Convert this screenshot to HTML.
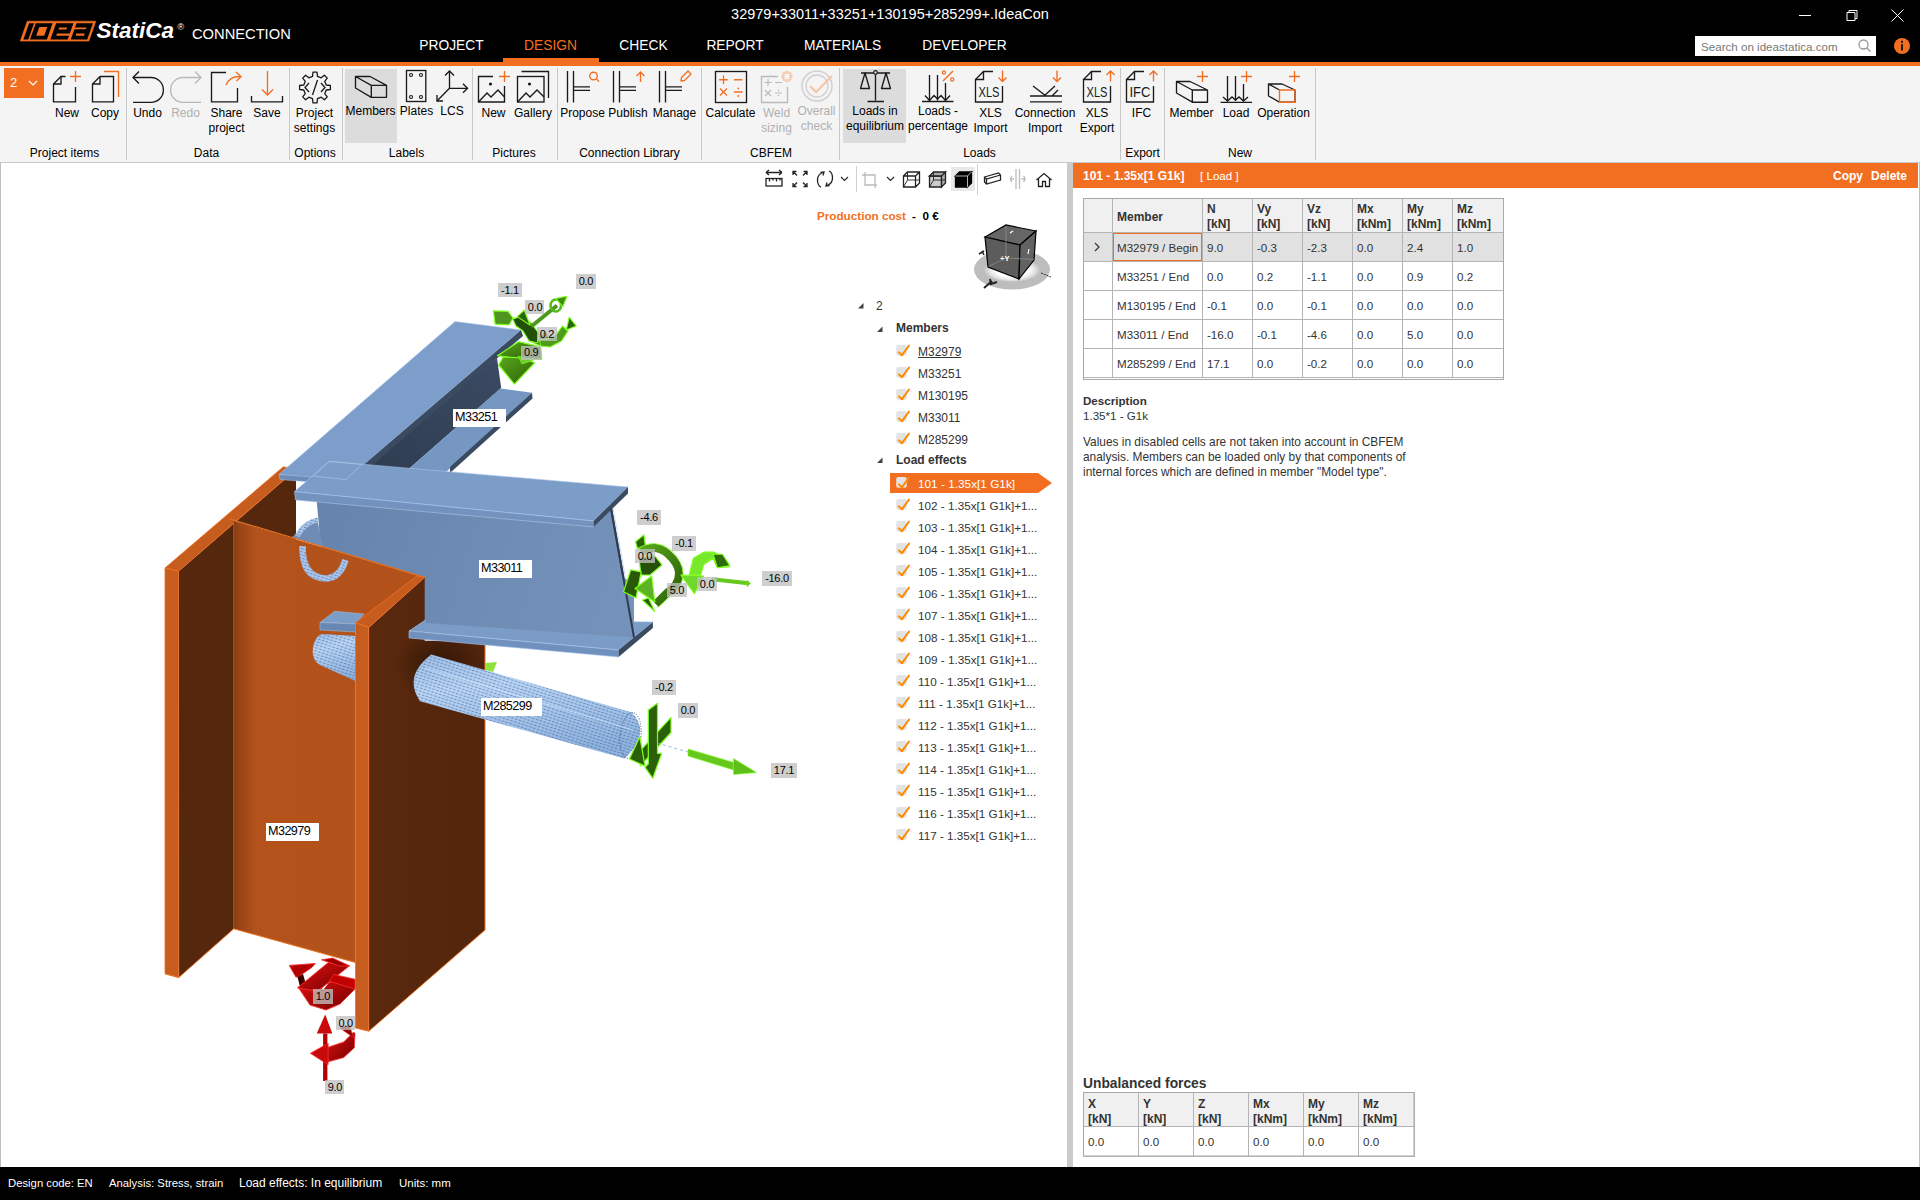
<!DOCTYPE html>
<html><head><meta charset="utf-8"><style>
html,body{margin:0;padding:0;width:1920px;height:1200px;overflow:hidden;background:#fff;font-family:"Liberation Sans", sans-serif;}
.t{position:absolute;white-space:nowrap;}
.r{position:absolute;}
svg{position:absolute;overflow:visible;}
</style></head><body>
<div class="r" style="left:0px;top:0px;width:1920px;height:62px;background:#000;"></div><div class="t" style="left:390px;width:1000px;text-align:center;top:4.9px;font-size:14.5px;line-height:18.1px;color:#fff;font-weight:400;">32979+33011+33251+130195+285299+.IdeaCon</div><svg style="left:0;top:0" width="1920" height="62"><g stroke="#fff" stroke-width="1" fill="none"><path d="M1799,15.5 H1811"/><path d="M1847,12.5 h8 v8 h-8 z M1849,12.5 v-2 h8 v8 h-2"/><path d="M1891.5,9.5 L1903.5,21.5 M1903.5,9.5 L1891.5,21.5"/></g></svg><svg style="left:0;top:0" width="300" height="62"><path d="M27.23,21.2 L95.83,21.2 L88.87,41.1 L20.27,41.1 Z" fill="#f26f22" stroke="#f26f22" stroke-width="0.6" stroke-linejoin="round"/><path d="M29.13,23.2 L34.03,23.2 L28.29,39.6 L23.39,39.6 Z M35.73,23.2 L52.63,23.2 L46.89,39.6 L29.99,39.6 Z M56.13,23.2 L73.43,23.2 L67.69,39.6 L50.39,39.6 Z M76.53,23.2 L92.93,23.2 L87.19,39.6 L70.79,39.6 Z" fill="#000"/><path d="M39.30,27 L47.30,27 L44.22,35.8 L36.22,35.8 Z M59.16,27.4 L67.16,27.4 L66.39,29.6 L58.39,29.6 Z M56.99,33.6 L70.59,33.6 L69.82,35.8 L56.22,35.8 Z M73.76,27.4 L86.46,27.4 L85.83,29.2 L73.13,29.2 Z M76.39,33.6 L84.79,33.6 L84.02,35.8 L75.62,35.8 Z" fill="#f26f22"/></svg><div class="t" style="left:96.5px;top:17.4px;font-size:22.5px;line-height:28.1px;color:#fff;font-weight:400;"><i><b>StatiCa</b></i></div><div class="t" style="left:177.5px;top:21.9px;font-size:9px;line-height:11.2px;color:#fff;font-weight:400;">®</div><div class="t" style="left:192px;top:25.3px;font-size:14.7px;line-height:18.4px;color:#fff;font-weight:400;">CONNECTION</div><div class="t" style="left:-48.5px;width:1000px;text-align:center;top:36.9px;font-size:13.8px;line-height:17.2px;color:#fff;font-weight:400;">PROJECT</div><div class="t" style="left:50.5px;width:1000px;text-align:center;top:36.9px;font-size:13.8px;line-height:17.2px;color:#f26f22;font-weight:400;">DESIGN</div><div class="t" style="left:143.5px;width:1000px;text-align:center;top:36.9px;font-size:13.8px;line-height:17.2px;color:#fff;font-weight:400;">CHECK</div><div class="t" style="left:235.0px;width:1000px;text-align:center;top:36.9px;font-size:13.8px;line-height:17.2px;color:#fff;font-weight:400;">REPORT</div><div class="t" style="left:342.5px;width:1000px;text-align:center;top:36.9px;font-size:13.8px;line-height:17.2px;color:#fff;font-weight:400;">MATERIALS</div><div class="t" style="left:464.5px;width:1000px;text-align:center;top:36.9px;font-size:13.8px;line-height:17.2px;color:#fff;font-weight:400;">DEVELOPER</div><div class="r" style="left:503px;top:58px;width:96px;height:4px;background:#f26f22;"></div><div class="r" style="left:1695px;top:36px;width:181px;height:20px;background:#fff;"></div><div class="t" style="left:1701px;top:40.0px;font-size:11.6px;line-height:14.5px;color:#777;font-weight:400;">Search on ideastatica.com</div><svg style="left:0;top:0" width="1920" height="62"><g stroke="#999" stroke-width="1.3" fill="none"><circle cx="1863.5" cy="44.5" r="4.5"/><path d="M1866.8,47.8 L1870.5,51.5"/></g><circle cx="1902" cy="46" r="8" fill="#f26f22"/><rect x="1901" y="44.2" width="2" height="6.3" fill="#1a1a1a"/><rect x="1901" y="40.8" width="2" height="2" fill="#1a1a1a"/></svg><div class="r" style="left:0px;top:62px;width:1920px;height:4px;background:#f26f22;"></div><div class="r" style="left:0px;top:66px;width:1920px;height:96px;background:#f4f4f4;"></div><div class="r" style="left:0px;top:162px;width:1920px;height:1px;background:#c9c9c9;"></div><div class="r" style="left:345px;top:69px;width:52px;height:74px;background:#dcdcdc;"></div><div class="r" style="left:843px;top:69px;width:63px;height:74px;background:#dcdcdc;"></div><div class="r" style="left:126px;top:68px;width:1px;height:92px;background:#c8c8c8;"></div><div class="r" style="left:289px;top:68px;width:1px;height:92px;background:#c8c8c8;"></div><div class="r" style="left:342px;top:68px;width:1px;height:92px;background:#c8c8c8;"></div><div class="r" style="left:472px;top:68px;width:1px;height:92px;background:#c8c8c8;"></div><div class="r" style="left:557px;top:68px;width:1px;height:92px;background:#c8c8c8;"></div><div class="r" style="left:701px;top:68px;width:1px;height:92px;background:#c8c8c8;"></div><div class="r" style="left:839px;top:68px;width:1px;height:92px;background:#c8c8c8;"></div><div class="r" style="left:1120px;top:68px;width:1px;height:92px;background:#c8c8c8;"></div><div class="r" style="left:1164px;top:68px;width:1px;height:92px;background:#c8c8c8;"></div><div class="r" style="left:1315px;top:68px;width:1px;height:92px;background:#c8c8c8;"></div><div class="t" style="left:-435.5px;width:1000px;text-align:center;top:145.5px;font-size:12px;line-height:15.0px;color:#000;font-weight:400;">Project items</div><div class="t" style="left:-293.5px;width:1000px;text-align:center;top:145.5px;font-size:12px;line-height:15.0px;color:#000;font-weight:400;">Data</div><div class="t" style="left:-185.0px;width:1000px;text-align:center;top:145.5px;font-size:12px;line-height:15.0px;color:#000;font-weight:400;">Options</div><div class="t" style="left:-93.5px;width:1000px;text-align:center;top:145.5px;font-size:12px;line-height:15.0px;color:#000;font-weight:400;">Labels</div><div class="t" style="left:14.0px;width:1000px;text-align:center;top:145.5px;font-size:12px;line-height:15.0px;color:#000;font-weight:400;">Pictures</div><div class="t" style="left:129.5px;width:1000px;text-align:center;top:145.5px;font-size:12px;line-height:15.0px;color:#000;font-weight:400;">Connection Library</div><div class="t" style="left:271.0px;width:1000px;text-align:center;top:145.5px;font-size:12px;line-height:15.0px;color:#000;font-weight:400;">CBFEM</div><div class="t" style="left:479.5px;width:1000px;text-align:center;top:145.5px;font-size:12px;line-height:15.0px;color:#000;font-weight:400;">Loads</div><div class="t" style="left:642.5px;width:1000px;text-align:center;top:145.5px;font-size:12px;line-height:15.0px;color:#000;font-weight:400;">Export</div><div class="t" style="left:740.0px;width:1000px;text-align:center;top:145.5px;font-size:12px;line-height:15.0px;color:#000;font-weight:400;">New</div><div class="t" style="left:-433px;width:1000px;text-align:center;top:105.5px;font-size:12px;line-height:15.0px;color:#000;font-weight:400;">New</div><div class="t" style="left:-395px;width:1000px;text-align:center;top:105.5px;font-size:12px;line-height:15.0px;color:#000;font-weight:400;">Copy</div><div class="t" style="left:-352.5px;width:1000px;text-align:center;top:105.5px;font-size:12px;line-height:15.0px;color:#000;font-weight:400;">Undo</div><div class="t" style="left:-314.5px;width:1000px;text-align:center;top:105.5px;font-size:12px;line-height:15.0px;color:#b0b0b0;font-weight:400;">Redo</div><div class="t" style="left:-273.5px;width:1000px;text-align:center;top:105.5px;font-size:12px;line-height:15.0px;color:#000;font-weight:400;">Share</div><div class="t" style="left:-273.5px;width:1000px;text-align:center;top:120.5px;font-size:12px;line-height:15.0px;color:#000;font-weight:400;">project</div><div class="t" style="left:-233px;width:1000px;text-align:center;top:105.5px;font-size:12px;line-height:15.0px;color:#000;font-weight:400;">Save</div><div class="t" style="left:-185.5px;width:1000px;text-align:center;top:105.5px;font-size:12px;line-height:15.0px;color:#000;font-weight:400;">Project</div><div class="t" style="left:-185.5px;width:1000px;text-align:center;top:120.5px;font-size:12px;line-height:15.0px;color:#000;font-weight:400;">settings</div><div class="t" style="left:-129.5px;width:1000px;text-align:center;top:103.5px;font-size:12px;line-height:15.0px;color:#000;font-weight:400;">Members</div><div class="t" style="left:-83.5px;width:1000px;text-align:center;top:103.5px;font-size:12px;line-height:15.0px;color:#000;font-weight:400;">Plates</div><div class="t" style="left:-48px;width:1000px;text-align:center;top:103.5px;font-size:12px;line-height:15.0px;color:#000;font-weight:400;">LCS</div><div class="t" style="left:-6.5px;width:1000px;text-align:center;top:105.5px;font-size:12px;line-height:15.0px;color:#000;font-weight:400;">New</div><div class="t" style="left:33px;width:1000px;text-align:center;top:105.5px;font-size:12px;line-height:15.0px;color:#000;font-weight:400;">Gallery</div><div class="t" style="left:82.5px;width:1000px;text-align:center;top:105.5px;font-size:12px;line-height:15.0px;color:#000;font-weight:400;">Propose</div><div class="t" style="left:128px;width:1000px;text-align:center;top:105.5px;font-size:12px;line-height:15.0px;color:#000;font-weight:400;">Publish</div><div class="t" style="left:174.5px;width:1000px;text-align:center;top:105.5px;font-size:12px;line-height:15.0px;color:#000;font-weight:400;">Manage</div><div class="t" style="left:230.5px;width:1000px;text-align:center;top:105.5px;font-size:12px;line-height:15.0px;color:#000;font-weight:400;">Calculate</div><div class="t" style="left:276.5px;width:1000px;text-align:center;top:105.5px;font-size:12px;line-height:15.0px;color:#b0b0b0;font-weight:400;">Weld</div><div class="t" style="left:276.5px;width:1000px;text-align:center;top:120.5px;font-size:12px;line-height:15.0px;color:#b0b0b0;font-weight:400;">sizing</div><div class="t" style="left:316.5px;width:1000px;text-align:center;top:103.5px;font-size:12px;line-height:15.0px;color:#b0b0b0;font-weight:400;">Overall</div><div class="t" style="left:316.5px;width:1000px;text-align:center;top:118.5px;font-size:12px;line-height:15.0px;color:#b0b0b0;font-weight:400;">check</div><div class="t" style="left:375px;width:1000px;text-align:center;top:103.5px;font-size:12px;line-height:15.0px;color:#000;font-weight:400;">Loads in</div><div class="t" style="left:375px;width:1000px;text-align:center;top:118.5px;font-size:12px;line-height:15.0px;color:#000;font-weight:400;">equilibrium</div><div class="t" style="left:438px;width:1000px;text-align:center;top:103.5px;font-size:12px;line-height:15.0px;color:#000;font-weight:400;">Loads -</div><div class="t" style="left:438px;width:1000px;text-align:center;top:118.5px;font-size:12px;line-height:15.0px;color:#000;font-weight:400;">percentage</div><div class="t" style="left:490.5px;width:1000px;text-align:center;top:105.5px;font-size:12px;line-height:15.0px;color:#000;font-weight:400;">XLS</div><div class="t" style="left:490.5px;width:1000px;text-align:center;top:120.5px;font-size:12px;line-height:15.0px;color:#000;font-weight:400;">Import</div><div class="t" style="left:545px;width:1000px;text-align:center;top:105.5px;font-size:12px;line-height:15.0px;color:#000;font-weight:400;">Connection</div><div class="t" style="left:545px;width:1000px;text-align:center;top:120.5px;font-size:12px;line-height:15.0px;color:#000;font-weight:400;">Import</div><div class="t" style="left:597px;width:1000px;text-align:center;top:105.5px;font-size:12px;line-height:15.0px;color:#000;font-weight:400;">XLS</div><div class="t" style="left:597px;width:1000px;text-align:center;top:120.5px;font-size:12px;line-height:15.0px;color:#000;font-weight:400;">Export</div><div class="t" style="left:641.5px;width:1000px;text-align:center;top:105.5px;font-size:12px;line-height:15.0px;color:#000;font-weight:400;">IFC</div><div class="t" style="left:691.5px;width:1000px;text-align:center;top:105.5px;font-size:12px;line-height:15.0px;color:#000;font-weight:400;">Member</div><div class="t" style="left:736px;width:1000px;text-align:center;top:105.5px;font-size:12px;line-height:15.0px;color:#000;font-weight:400;">Load</div><div class="t" style="left:783.5px;width:1000px;text-align:center;top:105.5px;font-size:12px;line-height:15.0px;color:#000;font-weight:400;">Operation</div><div class="r" style="left:4px;top:68px;width:40px;height:30px;background:#f26f22;"></div><div class="t" style="left:10px;top:75.4px;font-size:13px;line-height:16.2px;color:#fff;font-weight:400;">2</div><svg style="left:0;top:0" width="60" height="100"><path d="M29,81 L33,85 L37,81" stroke="#fff" stroke-width="1.2" fill="none"/></svg><div class="r" style="left:0px;top:163px;width:1067px;height:1004px;background:#fff;"></div><div class="r" style="left:0px;top:163px;width:1px;height:1004px;background:#bdbdbd;"></div><div class="r" style="left:1067px;top:163px;width:6px;height:1004px;background:#cbcbcb;"></div><div class="r" style="left:1073px;top:163px;width:846px;height:1004px;background:#fff;"></div><div class="r" style="left:1919px;top:163px;width:1px;height:1004px;background:#b8c4cc;"></div><div class="r" style="left:0px;top:1167px;width:1920px;height:33px;background:#000;"></div><div class="t" style="left:8px;top:1176.4px;font-size:11.3px;line-height:14.1px;color:#fff;font-weight:400;">Design code: EN</div><div class="t" style="left:109px;top:1176.4px;font-size:11.3px;line-height:14.1px;color:#fff;font-weight:400;">Analysis: Stress, strain</div><div class="t" style="left:239px;top:1176.0px;font-size:12px;line-height:15.0px;color:#fff;font-weight:400;">Load effects: In equilibrium</div><div class="t" style="left:399px;top:1176.3px;font-size:11.5px;line-height:14.4px;color:#fff;font-weight:400;">Units: mm</div><svg style="left:0;top:0" width="1920" height="170"><g stroke-width="1.35" fill="none" stroke-linecap="butt"><path d="M65.5,76.5 H61 L53.5,84 V101.8 H75.5 V87" stroke="#1a1a1a"/><path d="M53.5,84 H61 V76.5" stroke="#1a1a1a"/><path d="M75.5,71 V82 M70,76.5 H81" stroke="#f26f22"/><path d="M100,76.5 H113.5 V101.8 H92.5 V84 L100,76.5 M92.5,84 H100 V76.5" stroke="#1a1a1a"/><path d="M104,71.5 H118.5 V97" stroke="#f26f22"/><path d="M133,77.5 H151 A12.4,12.4 0 0 1 151,102.3 H133" stroke="#1a1a1a"/><path d="M139,71.5 L133,77.5 L139,83.5" stroke="#1a1a1a"/><path d="M201,77.5 H183 A12.4,12.4 0 0 0 183,102.3 H201" stroke="#b9b9b9"/><path d="M195,71.5 L201,77.5 L195,83.5" stroke="#b9b9b9"/><path d="M226,72.5 H211.5 V101.8 H237.5 V88" stroke="#1a1a1a"/><path d="M226,85 Q230,76 240,76.5" stroke="#f26f22"/><path d="M236,72 L241,76.5 L236.5,81" stroke="#f26f22"/><path d="M267.5,71 V95" stroke="#f26f22"/><path d="M262,89.5 L267.5,95 L273,89.5" stroke="#f26f22"/><path d="M251.5,96 V101.8 H282.5 V96" stroke="#1a1a1a"/><path d="M326.2,85.0 L330.4,85.5 L330.4,89.5 L326.2,90.0 L324.7,93.7 L327.3,96.9 L324.4,99.8 L321.2,97.2 L317.5,98.7 L317.0,102.9 L313.0,102.9 L312.5,98.7 L308.8,97.2 L305.6,99.8 L302.7,96.9 L305.3,93.7 L303.8,90.0 L299.6,89.5 L299.6,85.5 L303.8,85.0 L305.3,81.3 L302.7,78.1 L305.6,75.2 L308.8,77.8 L312.5,76.3 L313.0,72.1 L317.0,72.1 L317.5,76.3 L321.2,77.8 L324.4,75.2 L327.3,78.1 L324.7,81.3 Z" stroke="#1a1a1a" stroke-width="1.3" stroke-linejoin="round"/><path d="M309,83 L305,87.5 L309,92 M321,83 L325,87.5 L321,92 M317.5,80 L312.5,95" stroke="#1a1a1a" stroke-width="1.3"/><path d="M355.5,76.5 H370 L386.5,85.3 V97.3 H371.3 L355.5,88 Z M355.5,76.5 L371.3,85.3 H386.5 M371.3,85.3 V97.3" stroke="#1a1a1a" stroke-linejoin="round"/><rect x="406.5" y="70.5" width="19.3" height="31" stroke="#1a1a1a"/><circle cx="411" cy="75" r="1.5" stroke="#1a1a1a" stroke-width="1.1"/><circle cx="421" cy="75" r="1.5" stroke="#1a1a1a" stroke-width="1.1"/><circle cx="411" cy="97" r="1.5" stroke="#1a1a1a" stroke-width="1.1"/><circle cx="421" cy="97" r="1.5" stroke="#1a1a1a" stroke-width="1.1"/><path d="M449.5,71 V88.3 H467.5 M449.5,88.3 L437,101" stroke="#1a1a1a"/><path d="M445,75.5 L449.5,71 L454,75.5 M463,83.8 L467.5,88.3 L463,92.8 M437,95 V101 H443" stroke="#1a1a1a"/><path d="M493,76.5 H478.5 V102 H504.5 V86" stroke="#1a1a1a"/><path d="M478.5,102 L487,93 L491,97 L498,90 L504.5,97" stroke="#1a1a1a"/><circle cx="490.5" cy="84" r="1.6" fill="#1a1a1a" stroke="none"/><path d="M504.5,71 V82 M499,76.5 H510" stroke="#f26f22"/><rect x="517.5" y="76.5" width="26.5" height="25.5" stroke="#1a1a1a"/><path d="M517.5,102 L526,93 L530,97 L537,90 L544,97" stroke="#1a1a1a"/><circle cx="529.5" cy="84" r="1.6" fill="#1a1a1a" stroke="none"/><path d="M521.5,71.5 H548.5 V98" stroke="#1a1a1a"/><path d="M567.5,71 V102.5 M573.5,71 V102.5 M573.5,86.8 H590.0 M573.5,90.3 H590.0" stroke="#1a1a1a"/><path d="M613.5,71 V102.5 M619.5,71 V102.5 M619.5,86.8 H636.0 M619.5,90.3 H636.0" stroke="#1a1a1a"/><path d="M659.5,71 V102.5 M665.5,71 V102.5 M665.5,86.8 H682.0 M665.5,90.3 H682.0" stroke="#1a1a1a"/><circle cx="593.5" cy="76" r="3.8" stroke="#f26f22"/><path d="M596.3,78.8 L599,81.5" stroke="#f26f22"/><path d="M640.5,72 V82 M636.5,76 L640.5,72 L644.5,76" stroke="#f26f22"/><path d="M681,81 L681.5,77.5 L688,71 L691,74 L684.5,80.5 Z" stroke="#f26f22" stroke-linejoin="round"/><rect x="715.5" y="71.5" width="31" height="31" stroke="#1a1a1a"/><path d="M723.5,75.5 V84 M719.2,79.7 H727.8 M734,79.7 H742.5 M720,88.5 L727,95.5 M727,88.5 L720,95.5 M734,92 H742.5" stroke="#f26f22"/><circle cx="738.3" cy="88.5" r="0.9" fill="#f26f22" stroke="none"/><circle cx="738.3" cy="96" r="0.9" fill="#f26f22" stroke="none"/><path d="M778,76.5 H761.5 V102.5 H787.5 V87" stroke="#b9b9b9"/><path d="M768,79 V86 M764.5,82.5 H771.5 M775,82.5 H782 M765,90 L771,96 M771,90 L765,96 M775,93 H782" stroke="#b9b9b9" stroke-width="1.2"/><circle cx="778.5" cy="90.5" r="0.8" fill="#b9b9b9" stroke="none"/><circle cx="778.5" cy="95.5" r="0.8" fill="#b9b9b9" stroke="none"/><path d="M790.1,75.6 L791.9,75.6 L791.9,77.4 L790.1,77.4 L789.8,78.0 L791.1,79.3 L789.8,80.6 L788.5,79.3 L787.9,79.6 L787.9,81.4 L786.1,81.4 L786.1,79.6 L785.5,79.3 L784.2,80.6 L782.9,79.3 L784.2,78.0 L783.9,77.4 L782.1,77.4 L782.1,75.6 L783.9,75.6 L784.2,75.0 L782.9,73.7 L784.2,72.4 L785.5,73.7 L786.1,73.4 L786.1,71.6 L787.9,71.6 L787.9,73.4 L788.5,73.7 L789.8,72.4 L791.1,73.7 L789.8,75.0 Z" stroke="#f7c3a3" stroke-width="1.1"/><circle cx="817" cy="86" r="15" stroke="#d0d0d0" stroke-width="1.5"/><circle cx="817" cy="86" r="11" stroke="#d0d0d0" stroke-width="1.3"/><path d="M810,86 L816,92 L832,76" stroke="#f7c3a3" stroke-width="2"/><path d="M875.5,74 V100.5 M867.5,101.5 H884 M861,73 H890" stroke="#1a1a1a"/><circle cx="875.5" cy="72.5" r="1.8" stroke="#1a1a1a" stroke-width="1.2" fill="#dcdcdc"/><path d="M865,73 L860.5,88.5 H869.5 Z M886,73 L881.5,88.5 H890.5 Z" stroke="#1a1a1a" stroke-linejoin="round"/><path d="M929.5,75 V100.5 M937.5,75 V100.5 M945.5,83 V100.5 M922,101.5 H953.5" stroke="#1a1a1a"/><path d="M925,95.5 L929.5,100.5 L934,95.5 L937.5,99 L941,95.5 L945.5,100.5 L950,95.5" stroke="#1a1a1a"/><path d="M953,71 L943,81" stroke="#f26f22"/><circle cx="944" cy="72.5" r="1.6" stroke="#f26f22" stroke-width="1.2"/><circle cx="952.2" cy="79.5" r="1.6" stroke="#f26f22" stroke-width="1.2"/><path d="M993,71.5 H983.5 L975.5,79.5 V102 H1002.5 V86" stroke="#1a1a1a"/><path d="M975.5,79.5 H983.5 V71.5" stroke="#1a1a1a"/><text x="978.5" y="97" font-family="Liberation Sans" font-size="15" fill="#1a1a1a" stroke="none" textLength="21" lengthAdjust="spacingAndGlyphs">XLS</text><path d="M1002.5,70.5 V81.5 M998.5,77.5 L1002.5,81.5 L1006.5,77.5" stroke="#f26f22"/><path d="M1101,71.5 H1091.5 L1083.5,79.5 V102 H1110.5 V86" stroke="#1a1a1a"/><path d="M1083.5,79.5 H1091.5 V71.5" stroke="#1a1a1a"/><text x="1086.5" y="97" font-family="Liberation Sans" font-size="15" fill="#1a1a1a" stroke="none" textLength="21" lengthAdjust="spacingAndGlyphs">XLS</text><path d="M1110.5,71 V81.5 M1106.5,75 L1110.5,71 L1114.5,75" stroke="#f26f22"/><path d="M1144,71.5 H1134.5 L1126.5,79.5 V102 H1153.5 V86" stroke="#1a1a1a"/><path d="M1126.5,79.5 H1134.5 V71.5" stroke="#1a1a1a"/><text x="1129.5" y="97" font-family="Liberation Sans" font-size="15" fill="#1a1a1a" stroke="none" textLength="21" lengthAdjust="spacingAndGlyphs">IFC</text><path d="M1153.5,71 V81.5 M1149.5,75 L1153.5,71 L1157.5,75" stroke="#f26f22"/><path d="M1030,96 H1062 M1030,101.8 H1062 M1033,86 L1046,96 M1044,96 L1055,86 M1052,96 L1058,90" stroke="#1a1a1a"/><path d="M1057,70.5 V81.5 M1053,77.5 L1057,81.5 L1061,77.5" stroke="#f26f22"/><path d="M1176.5,81.5 H1190 L1207.5,90 V102.2 H1192.3 L1176.5,93 Z M1176.5,81.5 L1192.3,90 H1207.5 M1192.3,90 V102.2" stroke="#1a1a1a" stroke-linejoin="round"/><path d="M1202.5,71 V82 M1197,76.5 H1208" stroke="#f26f22"/><path d="M1227.5,76 V101 M1235.5,76 V101 M1243.5,84 V101 M1220.5,102.3 H1252" stroke="#1a1a1a"/><path d="M1223,97 L1227.5,101 L1232,97 L1235.5,100 L1239,97 L1243.5,101 L1248,97" stroke="#1a1a1a"/><path d="M1246.5,71 V82 M1241,76.5 H1252" stroke="#f26f22"/><path d="M1268.5,84 H1282 L1295,90 V102.2 H1279.5 L1268.5,96 Z M1268.5,84 L1279.5,90" stroke="#1a1a1a" stroke-linejoin="round"/><path d="M1279.5,90 H1295 V102.2 H1279.5 Z" stroke="#f26f22"/><path d="M1294.5,71 V82 M1289,76.5 H1300" stroke="#f26f22"/></g></svg><div class="r" style="left:951px;top:167px;width:24px;height:24px;background:#e8e8e8;"></div><div class="r" style="left:856px;top:166px;width:1px;height:26px;background:#d0d0d0;"></div><div class="r" style="left:977px;top:164px;width:1px;height:31px;background:#d0d0d0;"></div><svg style="left:0;top:0" width="1920" height="300"><g stroke="#222" stroke-width="1.3" fill="none"><path d="M766,172.5 H782 M766,172.5 l3,-2.5 M766,172.5 l3,2.5 M782,172.5 l-3,-2.5 M782,172.5 l-3,2.5"/><rect x="766" y="178.5" width="16" height="7.5"/><path d="M769.5,178.5 v3 M773,178.5 v2 M776.5,178.5 v3 M780,178.5 v2"/><path d="M793,175 v-3.5 h3.5 M793,171.5 l4,4 M807,175 v-3.5 h-3.5 M807,171.5 l-4,4 M793,183 v3.5 h3.5 M793,186.5 l4,-4 M807,183 v3.5 h-3.5 M807,186.5 l-4,-4"/><path d="M824,172 Q817,174 817.5,181 Q818,186 821,187 M820.5,172.5 L824,172 L823,175.5 M826,186 Q833,184 832.5,177 Q832,172 829,171 M829.5,185.5 L826,186 L827,182.5"/><path d="M841,177 l3.5,3.5 l3.5,-3.5" stroke-width="1.1"/><path d="M865,172 v13 h12 M862,175 h13 v13" stroke="#bbb"/><path d="M887,177 l3.5,3.5 l3.5,-3.5" stroke-width="1.1"/><path d="M903.5,176 h12 v11 h-12 z M903.5,176 l4,-4 h12 v11 l-4,4 M915.5,176 l4,-4"/><path d="M907.5,172 v8 h12 M907.5,180 l-4,7" stroke-width="0.9"/><path d="M929.5,176 h12 v11 h-12 z" fill="#ccc"/><path d="M929.5,176 l4,-4 h12 l-4,4 z M941.5,176 l4,-4 v11 l-4,4 z" fill="#aaa"/><path d="M933.5,172 v8 h12 M933.5,180 l-4,7" stroke-width="0.9"/><path d="M955.5,176 h12 v11 h-12 z M955.5,176 l4,-4 h12 l-4,4 z M967.5,176 l4,-4 v11 l-4,4 z" fill="#000" stroke="#000"/><path d="M955.5,176 h12 l4,-4 M967.5,176 v11" stroke="#fff" stroke-width="0.7"/><path d="M984.5,177 l14,-4 l2,2 v5 l-14,4 l-2,-2 z M984.5,177 l2,2 l14,-4 M986.5,179 v5"/><path d="M1016,169 v20 M1019.5,169 v20 M1012,176 q-3,3 0,6 M1023.5,176 q3,3 0,6 M1010,179 h4 M1021.5,179 h4" stroke="#bbb"/><path d="M1036.5,180 l7.5,-6.5 l7.5,6.5 M1038.5,178.5 v8 h4 v-5 h3 v5 h4 v-8"/></g></svg><div class="t" style="left:817px;top:209.2px;font-size:11.7px;line-height:14.6px;color:#f26f22;font-weight:400;"><b>Production cost</b></div><div class="t" style="left:912px;top:209.2px;font-size:11.7px;line-height:14.6px;color:#000;font-weight:400;"><b>-&nbsp; 0 €</b></div><svg style="left:0;top:0" width="1920" height="320">
<defs><radialGradient id="rg" cx="0.5" cy="0.55" r="0.5"><stop offset="0.55" stop-color="#fff"/><stop offset="0.75" stop-color="#e8e8e8"/><stop offset="1" stop-color="#bbb"/></radialGradient></defs>
<ellipse cx="1012" cy="269.5" rx="38" ry="20" fill="#bdbdbd"/>
<ellipse cx="1012" cy="269" rx="29" ry="12.5" fill="url(#rg)"/>
<path d="M985,237 L1006,225 L1036,231 L1020,245 Z" fill="#666" stroke="#000" stroke-width="1.2"/>
<path d="M985,237 L1020,245 L1019,279 L988,267 Z" fill="#5c5c5c" stroke="#000" stroke-width="1.2"/>
<path d="M1020,245 L1036,231 L1034,260 L1019,279 Z" fill="#626262" stroke="#000" stroke-width="1.2"/>
<path d="M1006,226 V258 L988.5,266.5 M1006,258 L1034,259.5" stroke="#8a8a8a" stroke-width="0.8" fill="none"/><text x="1000" y="261" font-size="7.5" fill="#fff" font-family="Liberation Sans" font-weight="bold">+Y</text>
<path d="M1010,233 l3,-2" stroke="#fff" stroke-width="1.3"/>
<path d="M1028,254 l1,-5" stroke="#fff" stroke-width="1.2"/>
<path d="M979,254 l5,-3 M982,251 l2,4" stroke="#222" stroke-width="1.5"/>
<path d="M984,288 l8,-7 M990,279 l1,6 M991,284 l6,-2" stroke="#222" stroke-width="2"/>
<path d="M1041,273 l10,4" stroke="#333" stroke-width="1" stroke-dasharray="2,1"/>
</svg><svg style="left:0;top:0" width="1920" height="320"><path d="M858,308.5 L863.5,308.5 L863.5,303 Z" fill="#444"/><path d="M877,332 L882.5,332 L882.5,326.5 Z" fill="#444"/><path d="M877,463 L882.5,463 L882.5,457.5 Z" fill="#444" transform="translate(0,0)"/></svg><div class="t" style="left:876px;top:298.5px;font-size:12px;line-height:15.0px;color:#333;font-weight:400;">2</div><div class="t" style="left:896px;top:321.0px;font-size:12px;line-height:15.0px;color:#333;font-weight:400;"><b>Members</b></div><div class="t" style="left:896px;top:453.0px;font-size:12px;line-height:15.0px;color:#333;font-weight:400;"><b>Load effects</b></div><svg style="left:890px;top:341px" width="24" height="20"><rect x="6.2" y="4" width="10.6" height="10.8" rx="2" fill="#e3e3e3"/><path d="M8.9,11.4 L11.9,14.3 L19,4.5" stroke="#ff8a00" stroke-width="2" fill="none" stroke-linecap="round" stroke-linejoin="round"/></svg><div class="t" style="left:918px;top:344.5px;font-size:12px;line-height:15.0px;color:#333;font-weight:400;text-decoration:underline;">M32979</div><svg style="left:890px;top:363px" width="24" height="20"><rect x="6.2" y="4" width="10.6" height="10.8" rx="2" fill="#e3e3e3"/><path d="M8.9,11.4 L11.9,14.3 L19,4.5" stroke="#ff8a00" stroke-width="2" fill="none" stroke-linecap="round" stroke-linejoin="round"/></svg><div class="t" style="left:918px;top:366.5px;font-size:12px;line-height:15.0px;color:#333;font-weight:400;">M33251</div><svg style="left:890px;top:385px" width="24" height="20"><rect x="6.2" y="4" width="10.6" height="10.8" rx="2" fill="#e3e3e3"/><path d="M8.9,11.4 L11.9,14.3 L19,4.5" stroke="#ff8a00" stroke-width="2" fill="none" stroke-linecap="round" stroke-linejoin="round"/></svg><div class="t" style="left:918px;top:388.5px;font-size:12px;line-height:15.0px;color:#333;font-weight:400;">M130195</div><svg style="left:890px;top:407px" width="24" height="20"><rect x="6.2" y="4" width="10.6" height="10.8" rx="2" fill="#e3e3e3"/><path d="M8.9,11.4 L11.9,14.3 L19,4.5" stroke="#ff8a00" stroke-width="2" fill="none" stroke-linecap="round" stroke-linejoin="round"/></svg><div class="t" style="left:918px;top:410.5px;font-size:12px;line-height:15.0px;color:#333;font-weight:400;">M33011</div><svg style="left:890px;top:429px" width="24" height="20"><rect x="6.2" y="4" width="10.6" height="10.8" rx="2" fill="#e3e3e3"/><path d="M8.9,11.4 L11.9,14.3 L19,4.5" stroke="#ff8a00" stroke-width="2" fill="none" stroke-linecap="round" stroke-linejoin="round"/></svg><div class="t" style="left:918px;top:432.5px;font-size:12px;line-height:15.0px;color:#333;font-weight:400;">M285299</div><svg style="left:0;top:0" width="1920" height="600"><path d="M890,473 H1038 L1052,483 L1038,493 H890 Z" fill="#f26f22"/></svg><svg style="left:890px;top:473px" width="24" height="20"><rect x="6.2" y="4" width="10.6" height="10.8" rx="2" fill="#e3e3e3"/><path d="M8.9,11.4 L11.9,14.3 L19,4.5" stroke="#ff8a00" stroke-width="2" fill="none" stroke-linecap="round" stroke-linejoin="round"/></svg><div class="t" style="left:918px;top:476.6px;font-size:11.8px;line-height:14.8px;color:#fff;font-weight:400;">101 - 1.35x[1 G1k]</div><svg style="left:890px;top:495px" width="24" height="20"><rect x="6.2" y="4" width="10.6" height="10.8" rx="2" fill="#e3e3e3"/><path d="M8.9,11.4 L11.9,14.3 L19,4.5" stroke="#ff8a00" stroke-width="2" fill="none" stroke-linecap="round" stroke-linejoin="round"/></svg><div class="t" style="left:918px;top:498.7px;font-size:11.7px;line-height:14.6px;color:#333;font-weight:400;">102 - 1.35x[1 G1k]+1...</div><svg style="left:890px;top:517px" width="24" height="20"><rect x="6.2" y="4" width="10.6" height="10.8" rx="2" fill="#e3e3e3"/><path d="M8.9,11.4 L11.9,14.3 L19,4.5" stroke="#ff8a00" stroke-width="2" fill="none" stroke-linecap="round" stroke-linejoin="round"/></svg><div class="t" style="left:918px;top:520.7px;font-size:11.7px;line-height:14.6px;color:#333;font-weight:400;">103 - 1.35x[1 G1k]+1...</div><svg style="left:890px;top:539px" width="24" height="20"><rect x="6.2" y="4" width="10.6" height="10.8" rx="2" fill="#e3e3e3"/><path d="M8.9,11.4 L11.9,14.3 L19,4.5" stroke="#ff8a00" stroke-width="2" fill="none" stroke-linecap="round" stroke-linejoin="round"/></svg><div class="t" style="left:918px;top:542.7px;font-size:11.7px;line-height:14.6px;color:#333;font-weight:400;">104 - 1.35x[1 G1k]+1...</div><svg style="left:890px;top:561px" width="24" height="20"><rect x="6.2" y="4" width="10.6" height="10.8" rx="2" fill="#e3e3e3"/><path d="M8.9,11.4 L11.9,14.3 L19,4.5" stroke="#ff8a00" stroke-width="2" fill="none" stroke-linecap="round" stroke-linejoin="round"/></svg><div class="t" style="left:918px;top:564.7px;font-size:11.7px;line-height:14.6px;color:#333;font-weight:400;">105 - 1.35x[1 G1k]+1...</div><svg style="left:890px;top:583px" width="24" height="20"><rect x="6.2" y="4" width="10.6" height="10.8" rx="2" fill="#e3e3e3"/><path d="M8.9,11.4 L11.9,14.3 L19,4.5" stroke="#ff8a00" stroke-width="2" fill="none" stroke-linecap="round" stroke-linejoin="round"/></svg><div class="t" style="left:918px;top:586.7px;font-size:11.7px;line-height:14.6px;color:#333;font-weight:400;">106 - 1.35x[1 G1k]+1...</div><svg style="left:890px;top:605px" width="24" height="20"><rect x="6.2" y="4" width="10.6" height="10.8" rx="2" fill="#e3e3e3"/><path d="M8.9,11.4 L11.9,14.3 L19,4.5" stroke="#ff8a00" stroke-width="2" fill="none" stroke-linecap="round" stroke-linejoin="round"/></svg><div class="t" style="left:918px;top:608.7px;font-size:11.7px;line-height:14.6px;color:#333;font-weight:400;">107 - 1.35x[1 G1k]+1...</div><svg style="left:890px;top:627px" width="24" height="20"><rect x="6.2" y="4" width="10.6" height="10.8" rx="2" fill="#e3e3e3"/><path d="M8.9,11.4 L11.9,14.3 L19,4.5" stroke="#ff8a00" stroke-width="2" fill="none" stroke-linecap="round" stroke-linejoin="round"/></svg><div class="t" style="left:918px;top:630.7px;font-size:11.7px;line-height:14.6px;color:#333;font-weight:400;">108 - 1.35x[1 G1k]+1...</div><svg style="left:890px;top:649px" width="24" height="20"><rect x="6.2" y="4" width="10.6" height="10.8" rx="2" fill="#e3e3e3"/><path d="M8.9,11.4 L11.9,14.3 L19,4.5" stroke="#ff8a00" stroke-width="2" fill="none" stroke-linecap="round" stroke-linejoin="round"/></svg><div class="t" style="left:918px;top:652.7px;font-size:11.7px;line-height:14.6px;color:#333;font-weight:400;">109 - 1.35x[1 G1k]+1...</div><svg style="left:890px;top:671px" width="24" height="20"><rect x="6.2" y="4" width="10.6" height="10.8" rx="2" fill="#e3e3e3"/><path d="M8.9,11.4 L11.9,14.3 L19,4.5" stroke="#ff8a00" stroke-width="2" fill="none" stroke-linecap="round" stroke-linejoin="round"/></svg><div class="t" style="left:918px;top:674.7px;font-size:11.7px;line-height:14.6px;color:#333;font-weight:400;">110 - 1.35x[1 G1k]+1...</div><svg style="left:890px;top:693px" width="24" height="20"><rect x="6.2" y="4" width="10.6" height="10.8" rx="2" fill="#e3e3e3"/><path d="M8.9,11.4 L11.9,14.3 L19,4.5" stroke="#ff8a00" stroke-width="2" fill="none" stroke-linecap="round" stroke-linejoin="round"/></svg><div class="t" style="left:918px;top:696.7px;font-size:11.7px;line-height:14.6px;color:#333;font-weight:400;">111 - 1.35x[1 G1k]+1...</div><svg style="left:890px;top:715px" width="24" height="20"><rect x="6.2" y="4" width="10.6" height="10.8" rx="2" fill="#e3e3e3"/><path d="M8.9,11.4 L11.9,14.3 L19,4.5" stroke="#ff8a00" stroke-width="2" fill="none" stroke-linecap="round" stroke-linejoin="round"/></svg><div class="t" style="left:918px;top:718.7px;font-size:11.7px;line-height:14.6px;color:#333;font-weight:400;">112 - 1.35x[1 G1k]+1...</div><svg style="left:890px;top:737px" width="24" height="20"><rect x="6.2" y="4" width="10.6" height="10.8" rx="2" fill="#e3e3e3"/><path d="M8.9,11.4 L11.9,14.3 L19,4.5" stroke="#ff8a00" stroke-width="2" fill="none" stroke-linecap="round" stroke-linejoin="round"/></svg><div class="t" style="left:918px;top:740.7px;font-size:11.7px;line-height:14.6px;color:#333;font-weight:400;">113 - 1.35x[1 G1k]+1...</div><svg style="left:890px;top:759px" width="24" height="20"><rect x="6.2" y="4" width="10.6" height="10.8" rx="2" fill="#e3e3e3"/><path d="M8.9,11.4 L11.9,14.3 L19,4.5" stroke="#ff8a00" stroke-width="2" fill="none" stroke-linecap="round" stroke-linejoin="round"/></svg><div class="t" style="left:918px;top:762.7px;font-size:11.7px;line-height:14.6px;color:#333;font-weight:400;">114 - 1.35x[1 G1k]+1...</div><svg style="left:890px;top:781px" width="24" height="20"><rect x="6.2" y="4" width="10.6" height="10.8" rx="2" fill="#e3e3e3"/><path d="M8.9,11.4 L11.9,14.3 L19,4.5" stroke="#ff8a00" stroke-width="2" fill="none" stroke-linecap="round" stroke-linejoin="round"/></svg><div class="t" style="left:918px;top:784.7px;font-size:11.7px;line-height:14.6px;color:#333;font-weight:400;">115 - 1.35x[1 G1k]+1...</div><svg style="left:890px;top:803px" width="24" height="20"><rect x="6.2" y="4" width="10.6" height="10.8" rx="2" fill="#e3e3e3"/><path d="M8.9,11.4 L11.9,14.3 L19,4.5" stroke="#ff8a00" stroke-width="2" fill="none" stroke-linecap="round" stroke-linejoin="round"/></svg><div class="t" style="left:918px;top:806.7px;font-size:11.7px;line-height:14.6px;color:#333;font-weight:400;">116 - 1.35x[1 G1k]+1...</div><svg style="left:890px;top:825px" width="24" height="20"><rect x="6.2" y="4" width="10.6" height="10.8" rx="2" fill="#e3e3e3"/><path d="M8.9,11.4 L11.9,14.3 L19,4.5" stroke="#ff8a00" stroke-width="2" fill="none" stroke-linecap="round" stroke-linejoin="round"/></svg><div class="t" style="left:918px;top:828.7px;font-size:11.7px;line-height:14.6px;color:#333;font-weight:400;">117 - 1.35x[1 G1k]+1...</div><div class="r" style="left:1073px;top:163px;width:845px;height:25px;background:#f26f22;"></div><div class="t" style="left:1083px;top:168.7px;font-size:12px;line-height:15.0px;color:#fff;font-weight:400;"><b>101 - 1.35x[1 G1k]</b></div><div class="t" style="left:1200px;top:168.9px;font-size:11.6px;line-height:14.5px;color:#fff;font-weight:400;">[ Load ]</div><div class="t" style="left:1833px;top:168.7px;font-size:12px;line-height:15.0px;color:#fff;font-weight:400;"><b>Copy</b></div><div class="t" style="left:1871px;top:168.7px;font-size:12px;line-height:15.0px;color:#fff;font-weight:400;"><b>Delete</b></div><div class="r" style="left:1083px;top:198px;width:420px;height:34px;background:#f0f0f0;"></div><div class="r" style="left:1083px;top:233px;width:420px;height:28px;background:#e1e1e1;"></div><svg style="left:0;top:0" width="1920" height="1200"><g fill="none" stroke="#b4b4b4" stroke-width="1"><path d="M1083.5,198 V378"/><path d="M1112.5,198 V378"/><path d="M1202.5,198 V378"/><path d="M1252.5,198 V378"/><path d="M1302.5,198 V378"/><path d="M1352.5,198 V378"/><path d="M1402.5,198 V378"/><path d="M1452.5,198 V378"/><path d="M1503.5,198 V378"/><path d="M1083,198.5 H1504"/><path d="M1083,232.5 H1504"/><path d="M1083,261.5 H1504"/><path d="M1083,290.5 H1504"/><path d="M1083,319.5 H1504"/><path d="M1083,348.5 H1504"/><path d="M1083,377.5 H1504"/><path d="M1083,379.5 H1504" stroke="#c8c8c8"/><rect x="1083.5" y="198.5" width="420" height="181" stroke="#a8a8a8"/><rect x="1113.5" y="233.5" width="88" height="27" stroke="#f26f22"/><path d="M1095,243 L1099,247 L1095,251" stroke="#333" stroke-width="1.2"/></g></svg><div class="t" style="left:1117px;top:209.5px;font-size:12px;line-height:15.0px;color:#333;font-weight:400;"><b>Member</b></div><div class="t" style="left:1207px;top:202.0px;font-size:12px;line-height:15.0px;color:#333;font-weight:400;"><b>N</b></div><div class="t" style="left:1207px;top:217.0px;font-size:12px;line-height:15.0px;color:#333;font-weight:400;"><b>[kN]</b></div><div class="t" style="left:1257px;top:202.0px;font-size:12px;line-height:15.0px;color:#333;font-weight:400;"><b>Vy</b></div><div class="t" style="left:1257px;top:217.0px;font-size:12px;line-height:15.0px;color:#333;font-weight:400;"><b>[kN]</b></div><div class="t" style="left:1307px;top:202.0px;font-size:12px;line-height:15.0px;color:#333;font-weight:400;"><b>Vz</b></div><div class="t" style="left:1307px;top:217.0px;font-size:12px;line-height:15.0px;color:#333;font-weight:400;"><b>[kN]</b></div><div class="t" style="left:1357px;top:202.0px;font-size:12px;line-height:15.0px;color:#333;font-weight:400;"><b>Mx</b></div><div class="t" style="left:1357px;top:217.0px;font-size:12px;line-height:15.0px;color:#333;font-weight:400;"><b>[kNm]</b></div><div class="t" style="left:1407px;top:202.0px;font-size:12px;line-height:15.0px;color:#333;font-weight:400;"><b>My</b></div><div class="t" style="left:1407px;top:217.0px;font-size:12px;line-height:15.0px;color:#333;font-weight:400;"><b>[kNm]</b></div><div class="t" style="left:1457px;top:202.0px;font-size:12px;line-height:15.0px;color:#333;font-weight:400;"><b>Mz</b></div><div class="t" style="left:1457px;top:217.0px;font-size:12px;line-height:15.0px;color:#333;font-weight:400;"><b>[kNm]</b></div><div class="t" style="left:1117px;top:241.2px;font-size:11.6px;line-height:14.5px;color:#333;font-weight:400;">M32979 / Begin</div><div class="t" style="left:1207px;top:241.2px;font-size:11.6px;line-height:14.5px;color:#333;font-weight:400;">9.0</div><div class="t" style="left:1257px;top:241.2px;font-size:11.6px;line-height:14.5px;color:#333;font-weight:400;">-0.3</div><div class="t" style="left:1307px;top:241.2px;font-size:11.6px;line-height:14.5px;color:#333;font-weight:400;">-2.3</div><div class="t" style="left:1357px;top:241.2px;font-size:11.6px;line-height:14.5px;color:#333;font-weight:400;">0.0</div><div class="t" style="left:1407px;top:241.2px;font-size:11.6px;line-height:14.5px;color:#333;font-weight:400;">2.4</div><div class="t" style="left:1457px;top:241.2px;font-size:11.6px;line-height:14.5px;color:#333;font-weight:400;">1.0</div><div class="t" style="left:1117px;top:270.2px;font-size:11.6px;line-height:14.5px;color:#333;font-weight:400;">M33251 / End</div><div class="t" style="left:1207px;top:270.2px;font-size:11.6px;line-height:14.5px;color:#333;font-weight:400;">0.0</div><div class="t" style="left:1257px;top:270.2px;font-size:11.6px;line-height:14.5px;color:#333;font-weight:400;">0.2</div><div class="t" style="left:1307px;top:270.2px;font-size:11.6px;line-height:14.5px;color:#333;font-weight:400;">-1.1</div><div class="t" style="left:1357px;top:270.2px;font-size:11.6px;line-height:14.5px;color:#333;font-weight:400;">0.0</div><div class="t" style="left:1407px;top:270.2px;font-size:11.6px;line-height:14.5px;color:#333;font-weight:400;">0.9</div><div class="t" style="left:1457px;top:270.2px;font-size:11.6px;line-height:14.5px;color:#333;font-weight:400;">0.2</div><div class="t" style="left:1117px;top:299.2px;font-size:11.6px;line-height:14.5px;color:#333;font-weight:400;">M130195 / End</div><div class="t" style="left:1207px;top:299.2px;font-size:11.6px;line-height:14.5px;color:#333;font-weight:400;">-0.1</div><div class="t" style="left:1257px;top:299.2px;font-size:11.6px;line-height:14.5px;color:#333;font-weight:400;">0.0</div><div class="t" style="left:1307px;top:299.2px;font-size:11.6px;line-height:14.5px;color:#333;font-weight:400;">-0.1</div><div class="t" style="left:1357px;top:299.2px;font-size:11.6px;line-height:14.5px;color:#333;font-weight:400;">0.0</div><div class="t" style="left:1407px;top:299.2px;font-size:11.6px;line-height:14.5px;color:#333;font-weight:400;">0.0</div><div class="t" style="left:1457px;top:299.2px;font-size:11.6px;line-height:14.5px;color:#333;font-weight:400;">0.0</div><div class="t" style="left:1117px;top:328.2px;font-size:11.6px;line-height:14.5px;color:#333;font-weight:400;">M33011 / End</div><div class="t" style="left:1207px;top:328.2px;font-size:11.6px;line-height:14.5px;color:#333;font-weight:400;">-16.0</div><div class="t" style="left:1257px;top:328.2px;font-size:11.6px;line-height:14.5px;color:#333;font-weight:400;">-0.1</div><div class="t" style="left:1307px;top:328.2px;font-size:11.6px;line-height:14.5px;color:#333;font-weight:400;">-4.6</div><div class="t" style="left:1357px;top:328.2px;font-size:11.6px;line-height:14.5px;color:#333;font-weight:400;">0.0</div><div class="t" style="left:1407px;top:328.2px;font-size:11.6px;line-height:14.5px;color:#333;font-weight:400;">5.0</div><div class="t" style="left:1457px;top:328.2px;font-size:11.6px;line-height:14.5px;color:#333;font-weight:400;">0.0</div><div class="t" style="left:1117px;top:357.2px;font-size:11.6px;line-height:14.5px;color:#333;font-weight:400;">M285299 / End</div><div class="t" style="left:1207px;top:357.2px;font-size:11.6px;line-height:14.5px;color:#333;font-weight:400;">17.1</div><div class="t" style="left:1257px;top:357.2px;font-size:11.6px;line-height:14.5px;color:#333;font-weight:400;">0.0</div><div class="t" style="left:1307px;top:357.2px;font-size:11.6px;line-height:14.5px;color:#333;font-weight:400;">-0.2</div><div class="t" style="left:1357px;top:357.2px;font-size:11.6px;line-height:14.5px;color:#333;font-weight:400;">0.0</div><div class="t" style="left:1407px;top:357.2px;font-size:11.6px;line-height:14.5px;color:#333;font-weight:400;">0.0</div><div class="t" style="left:1457px;top:357.2px;font-size:11.6px;line-height:14.5px;color:#333;font-weight:400;">0.0</div><div class="t" style="left:1083px;top:394.2px;font-size:11.6px;line-height:14.5px;color:#333;font-weight:400;"><b>Description</b></div><div class="t" style="left:1083px;top:409.2px;font-size:11.6px;line-height:14.5px;color:#333;font-weight:400;">1.35*1 - G1k</div><div class="t" style="left:1083px;top:435.1px;font-size:11.9px;line-height:14.9px;color:#333;font-weight:400;">Values in disabled cells are not taken into account in CBFEM</div><div class="t" style="left:1083px;top:450.1px;font-size:11.9px;line-height:14.9px;color:#333;font-weight:400;">analysis. Members can be loaded only by that components of</div><div class="t" style="left:1083px;top:465.1px;font-size:11.9px;line-height:14.9px;color:#333;font-weight:400;">internal forces which are defined in member "Model type".</div><div class="t" style="left:1083px;top:1075.4px;font-size:13.8px;line-height:17.2px;color:#333;font-weight:400;"><b>Unbalanced forces</b></div><div class="r" style="left:1083px;top:1092px;width:331px;height:34px;background:#f0f0f0;"></div><svg style="left:0;top:0" width="1920" height="1200"><g fill="none" stroke="#b4b4b4" stroke-width="1"><path d="M1083.5,1092 V1156"/><path d="M1138.5,1092 V1156"/><path d="M1193.5,1092 V1156"/><path d="M1248.5,1092 V1156"/><path d="M1303.5,1092 V1156"/><path d="M1358.5,1092 V1156"/><path d="M1414.5,1092 V1156"/><path d="M1083,1126.5 H1414"/><rect x="1083.5" y="1092.5" width="330.5" height="63.5" stroke="#a8a8a8"/><path d="M1083,1156.5 H1415" stroke="#b0b0b0"/></g></svg><div class="t" style="left:1088px;top:1096.5px;font-size:12px;line-height:15.0px;color:#333;font-weight:400;"><b>X</b></div><div class="t" style="left:1088px;top:1111.5px;font-size:12px;line-height:15.0px;color:#333;font-weight:400;"><b>[kN]</b></div><div class="t" style="left:1088px;top:1135.2px;font-size:11.6px;line-height:14.5px;color:#333;font-weight:400;">0.0</div><div class="t" style="left:1143px;top:1096.5px;font-size:12px;line-height:15.0px;color:#333;font-weight:400;"><b>Y</b></div><div class="t" style="left:1143px;top:1111.5px;font-size:12px;line-height:15.0px;color:#333;font-weight:400;"><b>[kN]</b></div><div class="t" style="left:1143px;top:1135.2px;font-size:11.6px;line-height:14.5px;color:#333;font-weight:400;">0.0</div><div class="t" style="left:1198px;top:1096.5px;font-size:12px;line-height:15.0px;color:#333;font-weight:400;"><b>Z</b></div><div class="t" style="left:1198px;top:1111.5px;font-size:12px;line-height:15.0px;color:#333;font-weight:400;"><b>[kN]</b></div><div class="t" style="left:1198px;top:1135.2px;font-size:11.6px;line-height:14.5px;color:#333;font-weight:400;">0.0</div><div class="t" style="left:1253px;top:1096.5px;font-size:12px;line-height:15.0px;color:#333;font-weight:400;"><b>Mx</b></div><div class="t" style="left:1253px;top:1111.5px;font-size:12px;line-height:15.0px;color:#333;font-weight:400;"><b>[kNm]</b></div><div class="t" style="left:1253px;top:1135.2px;font-size:11.6px;line-height:14.5px;color:#333;font-weight:400;">0.0</div><div class="t" style="left:1308px;top:1096.5px;font-size:12px;line-height:15.0px;color:#333;font-weight:400;"><b>My</b></div><div class="t" style="left:1308px;top:1111.5px;font-size:12px;line-height:15.0px;color:#333;font-weight:400;"><b>[kNm]</b></div><div class="t" style="left:1308px;top:1135.2px;font-size:11.6px;line-height:14.5px;color:#333;font-weight:400;">0.0</div><div class="t" style="left:1363px;top:1096.5px;font-size:12px;line-height:15.0px;color:#333;font-weight:400;"><b>Mz</b></div><div class="t" style="left:1363px;top:1111.5px;font-size:12px;line-height:15.0px;color:#333;font-weight:400;"><b>[kNm]</b></div><div class="t" style="left:1363px;top:1135.2px;font-size:11.6px;line-height:14.5px;color:#333;font-weight:400;">0.0</div><svg style="left:0;top:0" width="1067" height="1167">
<defs>
<linearGradient id="gweb" x1="0" y1="0" x2="1" y2="0"><stop offset="0" stop-color="#8e3f14"/><stop offset="0.12" stop-color="#b4521c"/><stop offset="1" stop-color="#b3511b"/></linearGradient>
<linearGradient id="gdark" x1="0" y1="0" x2="1" y2="0"><stop offset="0" stop-color="#5a290e"/><stop offset="1" stop-color="#52250c"/></linearGradient>
<linearGradient id="gw33011" gradientUnits="userSpaceOnUse" x1="316" y1="500" x2="634" y2="600"><stop offset="0" stop-color="#6583ab"/><stop offset="0.5" stop-color="#6e8bb3"/><stop offset="1" stop-color="#7592bb"/></linearGradient>
<linearGradient id="gw33251" x1="0" y1="1" x2="1" y2="0"><stop offset="0" stop-color="#2f3c50"/><stop offset="1" stop-color="#3a4a62"/></linearGradient>
<linearGradient id="gtube" x1="0" y1="0" x2="0.25" y2="1"><stop offset="0" stop-color="#9cbde8"/><stop offset="0.35" stop-color="#b8d4f6"/><stop offset="1" stop-color="#8fb3e0"/></linearGradient>
<pattern id="hatch" width="4" height="3" patternUnits="userSpaceOnUse" patternTransform="rotate(18)"><rect width="4" height="3" fill="none"/><path d="M0,2.5 H2.5" stroke="#2f4c74" stroke-width="0.8" opacity="0.6"/></pattern>
<radialGradient id="shadow" cx="0.5" cy="0.5" r="0.5"><stop offset="0" stop-color="#2a1204" stop-opacity="0.8"/><stop offset="1" stop-color="#2a1204" stop-opacity="0"/></radialGradient>
</defs><path d="M178.5,571.3 L296,469.5 L296,540 L233.75,521 L233.75,928.75 L178.75,977.5 Z" fill="#55270d" stroke="none" stroke-width="1" /><path d="M165,568 L283.4,466.7 L296,469.5 L178.5,571.3 Z" fill="#c65c1e" stroke="#f2701f" stroke-width="0.8" /><path d="M165,568 L178.5,571.3 L178.75,977.5 L165,973.75 Z" fill="#c65c1e" stroke="#f2701f" stroke-width="0.8" /><path d="M497,358 L501.2,388 L403,474 L358,472 Z" fill="url(#gw33251)" stroke="none" stroke-width="1" /><path d="M500.3,388.5 L532,392.8 L445,473 L403,474 Z" fill="#7597c2" stroke="none" stroke-width="1" /><path d="M532,392.8 L532.5,398.5 L450,473 L450,467 Z" fill="#3a4a60" stroke="none" stroke-width="1" /><path d="M455,321.5 L521,330 L340,485 L279,474.4 Z" fill="#7d9eca" stroke="#a9c6ea" stroke-width="0.6" /><path d="M521,330 L523,336 L342,491 L340,485 Z" fill="#3a4a60" stroke="none" stroke-width="1" /><path d="M279,474.4 L312,477 L311,482 L280,479.6 Z" fill="#6d8db8" stroke="#a9c6ea" stroke-width="0.5" /><path d="M316.5,498.5 L593.5,526.5 L611,508 L634,637.5 L425.8,623 L322,560 Z" fill="url(#gw33011)" stroke="none" stroke-width="1" /><path d="M611,508 L634,637.5" stroke="#2f3d52" stroke-width="2"/><path d="M613,508 L636,637" stroke="#a9c6ea" stroke-width="0.6"/><path d="M329.4,461.4 L628,487 L593.5,521 L294.5,491.6 Z" fill="#7c9dc8" stroke="#a9c6ea" stroke-width="0.6" /><path d="M312.7,476 L329.4,461.4 L361.7,464.5 L346,479.6 Z" fill="none" stroke="#a9c6ea" stroke-width="0.7" /><path d="M294.5,491.6 L593.5,521 L593.5,527 L295.5,500 Z" fill="#7393be" stroke="#a9c6ea" stroke-width="0.6" /><path d="M628,487 L628,493.5 L593.5,527 L593.5,521 Z" fill="#3a4a60" stroke="none" stroke-width="1" /><path d="M291.4,537.4 L316.7,517.4 L323.4,546.7 Z" fill="#6f8cb4" stroke="none" stroke-width="1" /><path d="M297,536 Q305,522 318,520" stroke="#a8c4ea" stroke-width="5" fill="none"/><path d="M297,536 Q305,522 318,520" stroke="url(#hatch)" stroke-width="5" fill="none"/><path d="M233.75,521 L424.7,577.4 L355.5,622.7 L355.5,962.5 L233.75,928.75 Z" fill="url(#gweb)" stroke="none" stroke-width="1" /><path d="M230,519 L424.7,577.4" stroke="#e8701f" stroke-width="1.2"/><path d="M296,470 L296,540" stroke="#3a1a06" stroke-width="0"/><path d="M302.5,546 Q302,578 326,578.5 Q340,578 345.5,560" stroke="#a8c4ea" stroke-width="6.5" fill="none"/><path d="M302.5,546 Q302,578 326,578.5 Q340,578 345.5,560" stroke="url(#hatch)" stroke-width="6.5" fill="none"/><path d="M320,622.5 L334.7,611.3 L364,614 L355.5,624 Z" fill="#7c9dc8" stroke="#a9c6ea" stroke-width="0.5" /><path d="M320,622.5 L355.5,624 L355.5,632 L320,630 Z" fill="#6888b3" stroke="#a9c6ea" stroke-width="0.5" /><path d="M322,634 L355.5,636 L355.5,681 L320,665 Q311,660 313,647 Q315,636 322,634 Z" fill="url(#gtube)"/><path d="M322,634 L355.5,636 L355.5,681 L320,665 Q311,660 313,647 Q315,636 322,634 Z" fill="url(#hatch)"/><path d="M368.7,627.5 L424.7,577.4 L424.7,641 L485,641 L485,930 L368.7,1031.25 Z" fill="url(#gdark)" stroke="none" stroke-width="1" /><ellipse cx="440" cy="665" rx="45" ry="40" fill="url(#shadow)"/><path d="M355.5,622.7 L417,576 L424.7,577.4 L368.7,627.5 Z" fill="#c65c1e" stroke="#f2701f" stroke-width="0.8" /><path d="M355.5,622.7 L368.7,627.5 L368.7,1031.25 L355.5,1028 Z" fill="#c65c1e" stroke="#f2701f" stroke-width="0.8" /><path d="M485,641 V930 L368.7,1031.25" stroke="#e8701f" stroke-width="1" fill="none"/><path d="M165,973.75 L178.75,977.5 L233.75,928.75 L355.5,962.5" stroke="#e8701f" stroke-width="1" fill="none"/><path d="M409,631 L425.8,619.8 L652.9,621.9 L618.5,650 Z" fill="#7b9cc7" stroke="#a9c6ea" stroke-width="0.6" /><path d="M409,631 L618.5,650 L618.5,657 L409,638 Z" fill="#7091bd" stroke="#a9c6ea" stroke-width="0.6" /><path d="M618.5,650 L652.9,621.9 L652.9,628 L618.5,657 Z" fill="#3a4a60" stroke="none" stroke-width="1" /><path d="M424.7,560 L634,580 L634,637.5 L425.8,623 Z" fill="url(#gw33011)" stroke="none" stroke-width="1" /><path d="M611,508 L634,637.5" stroke="#2f3d52" stroke-width="2"/><path d="M485,663 L497,662 L493,672 L485,670 Z" fill="#8fe33a" stroke="none" stroke-width="1" /><path d="M431.25,654.4 L631.9,712.5 Q652,733 624.4,758.4 L420,701.25 Q403,676 431.25,654.4 Z" fill="url(#gtube)"/><path d="M431.25,654.4 L631.9,712.5 Q652,733 624.4,758.4 L420,701.25 Q403,676 431.25,654.4 Z" fill="url(#hatch)"/><ellipse cx="630.5" cy="735.5" rx="10.5" ry="23" fill="none" stroke="#34507a" stroke-width="0.9" stroke-dasharray="1,1.5" transform="rotate(6 630.5 735.5)"/><path d="M425,668 L633,730" stroke="#d8ecff" stroke-width="1.2" opacity="0.6"/></svg><div class="r" style="left:453px;top:409px;width:53px;height:18px;background:#fff;"></div><div class="t" style="left:455px;top:410.1px;font-size:12.6px;line-height:15.8px;color:#000;font-weight:400;letter-spacing:-0.55px;">M33251</div><div class="r" style="left:479px;top:560px;width:53px;height:18px;background:#fff;"></div><div class="t" style="left:481px;top:561.1px;font-size:12.6px;line-height:15.8px;color:#000;font-weight:400;letter-spacing:-0.55px;">M33011</div><div class="r" style="left:481px;top:698px;width:61px;height:18px;background:#fff;"></div><div class="t" style="left:483px;top:699.1px;font-size:12.6px;line-height:15.8px;color:#000;font-weight:400;letter-spacing:-0.55px;">M285299</div><div class="r" style="left:266px;top:823px;width:53px;height:18px;background:#fff;"></div><div class="t" style="left:268px;top:824.1px;font-size:12.6px;line-height:15.8px;color:#000;font-weight:400;letter-spacing:-0.55px;">M32979</div><svg style="left:0;top:0" width="1067" height="1167"><defs><linearGradient id="gg" x1="0" y1="0" x2="1" y2="1"><stop offset="0" stop-color="#5aa81c"/><stop offset="1" stop-color="#2a5e05"/></linearGradient><linearGradient id="gr" x1="0" y1="0" x2="1" y2="1"><stop offset="0" stop-color="#e01010"/><stop offset="1" stop-color="#700000"/></linearGradient></defs><path d="M493.4,310.8 L508.0,311.3 L513.0,318.0 L509.2,324.8 L495.2,324.2 Z" fill="#4d9420" stroke="#7dff1f" stroke-width="1.2" stroke-linejoin="round"/><path d="M512.7,318.9 L521.0,316.5 L531.0,323.0 L538.5,333.0 L537.5,343.0 L529.0,341.0 L523.0,331.0 L516.0,326.0 Z" fill="#22500a" stroke="#7dff1f" stroke-width="1.1" stroke-linejoin="round"/><path d="M529.0,341.0 L537.5,343.0 L540.0,336.0 L545.0,331.0 L548.0,335.0 L541.0,346.0 Z" fill="#3f8a12" stroke="#7dff1f" stroke-width="0.8" stroke-linejoin="round"/><path d="M517.3,316.6 L524.3,310.2 L530.2,325.3 Z" fill="#2c640c" stroke="#7dff1f" stroke-width="1.1" stroke-linejoin="round"/><path d="M531.3,326.5 L557,305.5" stroke="#4d9a1a" stroke-width="4"/><ellipse cx="555.8" cy="305.5" rx="5.3" ry="6" fill="none" stroke="#58b81c" stroke-width="2.6"/><path d="M555.8,298.5 L567.0,296.2 L562.8,306.7 Z" fill="#3f8a12" stroke="#7dff1f" stroke-width="1.1" stroke-linejoin="round"/><path d="M568.0,331.0 L561.5,341.0 L550.0,347.0 L540.7,346.0 L539.5,339.5 L547.7,339.5 L556.0,334.8 L562.5,326.0 Z" fill="#4f9c1c" stroke="#7dff1f" stroke-width="1.1" stroke-linejoin="round"/><path d="M569.2,317.2 L576.2,325.9 L566.3,330.0 Z" fill="#2c640c" stroke="#7dff1f" stroke-width="1.1" stroke-linejoin="round"/><path d="M497.5,355.7 L518.5,341.7 L540.7,346.9 L541.8,359.2 L521.4,359.2 Z" fill="url(#gg)" stroke="#7dff1f" stroke-width="1.2" stroke-linejoin="round"/><path d="M498.7,365.0 L503.3,356.8 L522.0,358.0 L534.8,362.7 L514.4,384.2 Z" fill="url(#gg)" stroke="#7dff1f" stroke-width="1.2" stroke-linejoin="round"/><path d="M518.0,356.0 L534.0,360.0 L522.0,364.0 Z" fill="#6fcf2a" stroke="#7dff1f" stroke-width="0.6" stroke-linejoin="round"/><path d="M635.5,541.7 L643.9,534.9 L645.4,545.8 L637.6,549.0 Z" fill="#2c5f0a" stroke="#7dff1f" stroke-width="1.2" stroke-linejoin="round"/><path d="M641.25,552 Q655,543 668,554 Q679,564 679,573 Q679,585 668,592 Q660,600 655.8,604.2" stroke="url(#gg)" stroke-width="8" fill="none"/><path d="M638,548 Q655,538 671,550 Q683,562 683,573 Q683,588 671,596 Q662,604 657,608" stroke="#7dff1f" stroke-width="0.8" fill="none"/><path d="M639.0,558.0 L655.0,556.0 L662.0,565.0 L650.0,575.0 L641.0,575.0 Z" fill="#24500a" stroke="#7dff1f" stroke-width="1.1" stroke-linejoin="round"/><path d="M623.5,591.7 L630.8,569.8 L641.2,571.9 L636.0,597.9 Z" fill="#2a5a08" stroke="#7dff1f" stroke-width="1.2" stroke-linejoin="round"/><path d="M635.0,588.5 L651.7,576.0 L654.8,602.0 Z" fill="#5db322" stroke="#7dff1f" stroke-width="1.1" stroke-linejoin="round"/><path d="M642.3,600.0 L648.5,597.9 L654.8,611.5 Z" fill="#2a5a08" stroke="#7dff1f" stroke-width="1.1" stroke-linejoin="round"/><path d="M689.2,575.0 L693.3,558.3 L703.8,552.1 L714.2,552.1 L724.6,558.3 L729.8,566.7 L717.3,567.7 L713.1,558.3 L703.8,564.6 L700.6,575.0 Z" fill="#78e82a" stroke="#7dff1f" stroke-width="1.1" stroke-linejoin="round"/><path d="M713.1,554.2 L722.5,554.2 L729.8,565.6 L717.3,567.7 Z" fill="#2f6a0a" stroke="#7dff1f" stroke-width="1.1" stroke-linejoin="round"/><path d="M680.8,575.0 L703.8,576.0 L694.4,593.8 Z" fill="#70d82a" stroke="#7dff1f" stroke-width="1.1" stroke-linejoin="round"/><path d="M712,579.2 L748.5,583.3" stroke="#66c81c" stroke-width="4"/><path d="M747.0,580.0 L750.5,583.5 L747.0,587.0 Z" fill="#66c81c" stroke="#7dff1f" stroke-width="0.6" stroke-linejoin="round"/><path d="M639.8,751.2 L671.0,717.4 L671.0,732.5 L640.3,766.0 Z" fill="#2c5f0a" stroke="#7dff1f" stroke-width="1.2" stroke-linejoin="round"/><path d="M629.4,759.0 L639.8,736.7 L645.0,766.0 Z" fill="#2c5f0a" stroke="#7dff1f" stroke-width="1.2" stroke-linejoin="round"/><path d="M648.3,710.1 L657.5,703.3 L657.5,753.3 L661.7,753.3 L652.8,778.3 L645.0,767.4 L648.3,763.8 Z" fill="#2c5f0a" stroke="#7dff1f" stroke-width="1.2" stroke-linejoin="round"/><path d="M657,743 L688,752" stroke="#7da6da" stroke-width="0.8" stroke-dasharray="3,3"/><path d="M688.0,749.0 L734.0,762.5 L733.5,770.0 L688.0,756.0 Z" fill="#66c81c" stroke="#7dff1f" stroke-width="0.6" stroke-linejoin="round"/><path d="M733.5,758.5 L756.5,772.6 L733.5,774.5 Z" fill="#5cbf1a" stroke="#7dff1f" stroke-width="0.6" stroke-linejoin="round"/><path d="M298.0,987.0 L310.0,1005.0 L326.0,1010.0 L340.0,1004.0 L355.0,989.0 L355.0,980.0 L330.0,982.0 L317.0,991.0 Z" fill="url(#gr)" stroke="#ff2a2a" stroke-width="0.9" stroke-linejoin="round"/><path d="M318.0,982.0 L328.0,984.0 L323.0,990.0 Z" fill="#ffffff" stroke="none" stroke-width="1" stroke-linejoin="round"/><path d="M289.3,965.4 L315.3,963.5 L312.0,967.3 L298.0,977.0 L295.8,977.0 Z" fill="#b00000" stroke="#ff2a2a" stroke-width="0.9" stroke-linejoin="round"/><path d="M297.5,977.0 L303.0,974.0 L305.6,983.0 L300.0,986.8 Z" fill="#3a0000" stroke="none" stroke-width="1" stroke-linejoin="round"/><path d="M297.5,987.9 L328.3,962.5 L348.9,966.3 L317.5,991.2 Z" fill="url(#gr)" stroke="#ff2a2a" stroke-width="0.9" stroke-linejoin="round"/><path d="M321.3,959.8 L332.7,958.1 L350.0,966.0 L340.0,966.0 Z" fill="#9a0000" stroke="#ff2a2a" stroke-width="0.8" stroke-linejoin="round"/><path d="M333.8,974.4 L354.9,979.2 L354.9,989.0 L329.4,981.4 Z" fill="#c00000" stroke="#ff2a2a" stroke-width="0.8" stroke-linejoin="round"/><path d="M323.1,1033.5 L327.4,1033.5 L327.4,1081.0 L323.1,1081.0 Z" fill="#b00000" stroke="none" stroke-width="1" stroke-linejoin="round"/><path d="M316.8,1033.5 L325.2,1014.4 L332.3,1033.5 Z" fill="#c80a0a" stroke="none" stroke-width="1" stroke-linejoin="round"/><path d="M326.7,1047.7 L343.7,1042.0 L353.6,1032.1 L355.0,1033.5 L354.3,1047.7 L343.7,1057.6 L328.1,1061.8 Z" fill="url(#gr)" stroke="#ff2a2a" stroke-width="0.8" stroke-linejoin="round"/><path d="M310.4,1053.3 L328.1,1043.4 L328.1,1064.7 Z" fill="#c80a0a" stroke="#ff2a2a" stroke-width="0.8" stroke-linejoin="round"/><path d="M339.5,1027.8 L349.3,1025.0 L353.6,1037.7 Z" fill="#900000" stroke="#ff2a2a" stroke-width="0.6" stroke-linejoin="round"/></svg><div class="r" style="left:498px;top:283px;width:24px;height:14px;background:rgba(192,192,192,0.78);"></div><div class="t" style="left:9.949999999999989px;width:1000px;text-align:center;top:284.1px;font-size:11px;line-height:13.8px;color:#000;font-weight:400;letter-spacing:-0.3px;">-1.1</div><div class="r" style="left:576px;top:274px;width:20px;height:15px;background:rgba(192,192,192,0.78);"></div><div class="t" style="left:86.0px;width:1000px;text-align:center;top:274.9px;font-size:11px;line-height:13.8px;color:#000;font-weight:400;letter-spacing:-0.3px;">0.0</div><div class="r" style="left:525px;top:300px;width:19px;height:14px;background:rgba(192,192,192,0.78);"></div><div class="t" style="left:35.02499999999998px;width:1000px;text-align:center;top:300.8px;font-size:11px;line-height:13.8px;color:#000;font-weight:400;letter-spacing:-0.3px;">0.0</div><div class="r" style="left:537px;top:327px;width:20px;height:14px;background:rgba(192,192,192,0.78);"></div><div class="t" style="left:47.0px;width:1000px;text-align:center;top:327.7px;font-size:11px;line-height:13.8px;color:#000;font-weight:400;letter-spacing:-0.3px;">0.2</div><div class="r" style="left:521px;top:346px;width:20px;height:14px;background:rgba(192,192,192,0.78);"></div><div class="t" style="left:31.149999999999977px;width:1000px;text-align:center;top:346.4px;font-size:11px;line-height:13.8px;color:#000;font-weight:400;letter-spacing:-0.3px;">0.9</div><div class="r" style="left:637px;top:510px;width:24px;height:15px;background:rgba(192,192,192,0.78);"></div><div class="t" style="left:148.95000000000005px;width:1000px;text-align:center;top:511.1px;font-size:11px;line-height:13.8px;color:#000;font-weight:400;letter-spacing:-0.3px;">-4.6</div><div class="r" style="left:672px;top:536px;width:24px;height:15px;background:rgba(192,192,192,0.78);"></div><div class="t" style="left:184.0px;width:1000px;text-align:center;top:537.1px;font-size:11px;line-height:13.8px;color:#000;font-weight:400;letter-spacing:-0.3px;">-0.1</div><div class="r" style="left:635px;top:549px;width:20px;height:14px;background:rgba(192,192,192,0.78);"></div><div class="t" style="left:144.89999999999998px;width:1000px;text-align:center;top:549.9px;font-size:11px;line-height:13.8px;color:#000;font-weight:400;letter-spacing:-0.3px;">0.0</div><div class="r" style="left:667px;top:583px;width:20px;height:14px;background:rgba(192,192,192,0.78);"></div><div class="t" style="left:177.0px;width:1000px;text-align:center;top:584.1px;font-size:11px;line-height:13.8px;color:#000;font-weight:400;letter-spacing:-0.3px;">5.0</div><div class="r" style="left:697px;top:577px;width:20px;height:14px;background:rgba(192,192,192,0.78);"></div><div class="t" style="left:207.04999999999995px;width:1000px;text-align:center;top:578.1px;font-size:11px;line-height:13.8px;color:#000;font-weight:400;letter-spacing:-0.3px;">0.0</div><div class="r" style="left:762px;top:571px;width:30px;height:15px;background:rgba(192,192,192,0.78);"></div><div class="t" style="left:276.95000000000005px;width:1000px;text-align:center;top:572.0px;font-size:11px;line-height:13.8px;color:#000;font-weight:400;letter-spacing:-0.3px;">-16.0</div><div class="r" style="left:652px;top:680px;width:24px;height:15px;background:rgba(192,192,192,0.78);"></div><div class="t" style="left:164.0px;width:1000px;text-align:center;top:681.1px;font-size:11px;line-height:13.8px;color:#000;font-weight:400;letter-spacing:-0.3px;">-0.2</div><div class="r" style="left:678px;top:703px;width:20px;height:15px;background:rgba(192,192,192,0.78);"></div><div class="t" style="left:187.95000000000005px;width:1000px;text-align:center;top:704.1px;font-size:11px;line-height:13.8px;color:#000;font-weight:400;letter-spacing:-0.3px;">0.0</div><div class="r" style="left:771px;top:763px;width:26px;height:15px;background:rgba(192,192,192,0.78);"></div><div class="t" style="left:283.95000000000005px;width:1000px;text-align:center;top:764.0px;font-size:11px;line-height:13.8px;color:#000;font-weight:400;letter-spacing:-0.3px;">17.1</div><div class="r" style="left:313px;top:989px;width:20px;height:15px;background:rgba(192,192,192,0.78);"></div><div class="t" style="left:-177.0px;width:1000px;text-align:center;top:990.0px;font-size:11px;line-height:13.8px;color:#000;font-weight:400;letter-spacing:-0.3px;">1.0</div><div class="r" style="left:336px;top:1016px;width:19px;height:14px;background:rgba(192,192,192,0.78);"></div><div class="t" style="left:-154.39999999999998px;width:1000px;text-align:center;top:1017.1px;font-size:11px;line-height:13.8px;color:#000;font-weight:400;letter-spacing:-0.3px;">0.0</div><div class="r" style="left:325px;top:1080px;width:19px;height:14px;background:rgba(192,192,192,0.78);"></div><div class="t" style="left:-165.0px;width:1000px;text-align:center;top:1080.8px;font-size:11px;line-height:13.8px;color:#000;font-weight:400;letter-spacing:-0.3px;">9.0</div>
</body></html>
